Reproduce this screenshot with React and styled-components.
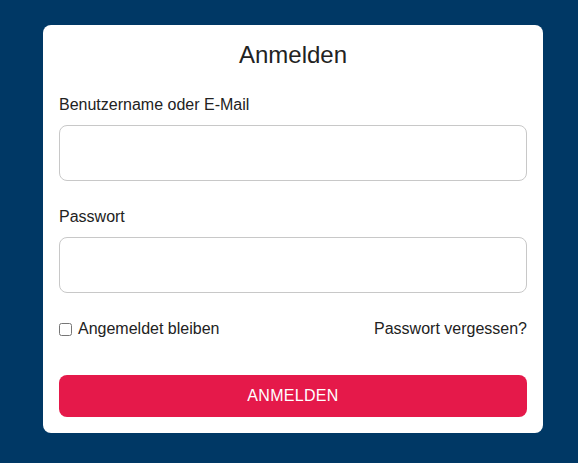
import React from 'react';
import styled, { createGlobalStyle } from 'styled-components';

const GlobalStyle = createGlobalStyle`
    html, body {
        margin: 0;
        padding: 0;
        background: #003865;
        font-family: "Liberation Sans", Arial, sans-serif;
    }
`;

const Page = styled.div`
    min-height: 463px;
    padding: 25px 35px 0 43px;
    box-sizing: border-box;
`;

const Card = styled.form`
    width: 500px;
    box-sizing: border-box;
    background: #fff;
    border-radius: 8px;
    padding: 16px;
    display: flex;
    flex-direction: column;
    color: #222;
`;

const Title = styled.h2`
    margin: 0 0 27px;
    font-size: 24px;
    line-height: 28px;
    font-weight: 400;
    text-align: center;
`;

const Field = styled.div`
    display: flex;
    flex-direction: column;
    margin-bottom: 27px;

    label {
        font-size: 16px;
        line-height: 18px;
        margin-bottom: 11px;
    }
`;

const Input = styled.input`
    height: 56px;
    box-sizing: border-box;
    border: 1px solid #c8c8c8;
    border-radius: 8px;
    padding: 0 12px;
    font-size: 16px;
    font-family: inherit;
    outline: none;
`;

const OptionsRow = styled.div`
    display: flex;
    justify-content: space-between;
    align-items: center;
    font-size: 16px;
    line-height: 18px;
    margin-bottom: 37px;

    a {
        color: #222;
        text-decoration: none;
    }
`;

const Remember = styled.label`
    display: flex;
    align-items: center;
    gap: 6px;

    input {
        margin: 0;
        width: 13px;
        height: 13px;
    }
`;

const SubmitButton = styled.button`
    height: 42px;
    border: none;
    border-radius: 8px;
    background: #e5194a;
    color: #fff;
    font-family: inherit;
    font-size: 16px;
    letter-spacing: 0.3px;
    cursor: pointer;
`;

const App = () => {
    return (
        <Page>
            <GlobalStyle />
            <Card onSubmit={e => e.preventDefault()}>
                <Title>Anmelden</Title>
                <Field>
                    <label htmlFor="user">Benutzername oder E-Mail</label>
                    <Input id="user" type="text" />
                </Field>
                <Field>
                    <label htmlFor="pass">Passwort</label>
                    <Input id="pass" type="password" />
                </Field>
                <OptionsRow>
                    <Remember>
                        <input type="checkbox" />
                        Angemeldet bleiben
                    </Remember>
                    <a href="#">Passwort vergessen?</a>
                </OptionsRow>
                <SubmitButton type="submit">ANMELDEN</SubmitButton>
            </Card>
        </Page>
    );
};

export default App;
